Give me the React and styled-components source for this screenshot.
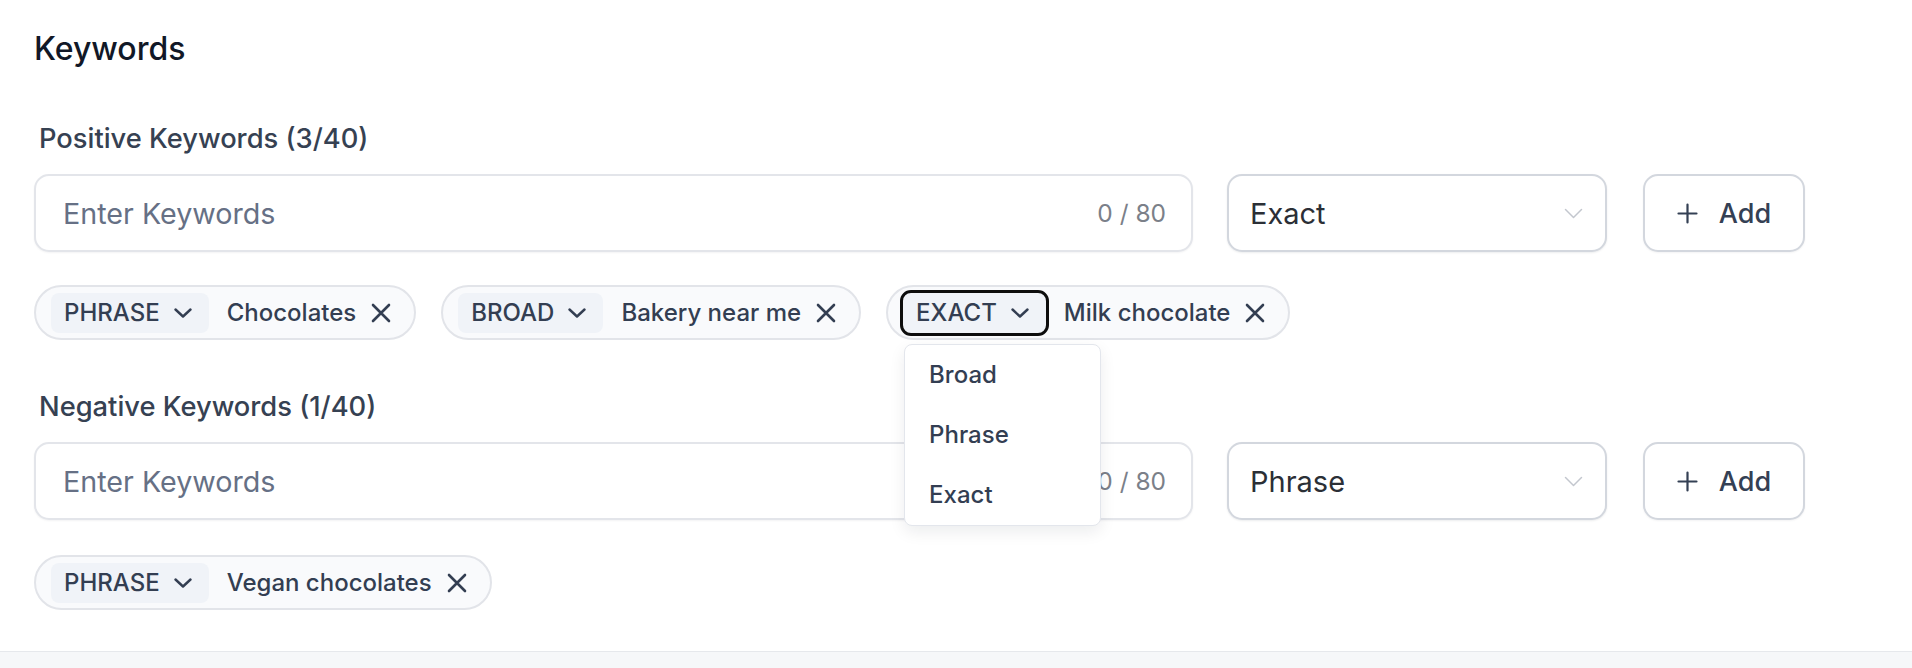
import React from 'react'
import styled, { createGlobalStyle } from 'styled-components'

const GlobalStyle = createGlobalStyle`
  * { box-sizing: border-box; }
  body {
    margin: 0;
    background: #f6f7f9;
    font-family: Inter, "Noto Sans", sans-serif;
  }
`

const Card = styled.section`
  height: 652px;
  background: #ffffff;
  padding: 29px 0 0 34px;
  box-shadow: 0 1px 3px rgba(16, 24, 40, 0.1);
  border-bottom: 1px solid #e6e8ec;
`

const Title = styled.h2`
  margin: 0;
  font-size: 32px;
  line-height: 40px;
  font-weight: 500;
  color: #111827;
`

const Label = styled.div`
  margin-top: ${({ $top }) => $top}px;
  padding-left: 5px;
  font-size: 27.3px;
  line-height: 34px;
  font-weight: 500;
  color: #364152;
`

const Row = styled.div`
  display: flex;
  align-items: stretch;
  height: 78px;
  margin-top: 18px;
`

const InputBox = styled.div`
  width: 1159px;
  display: flex;
  align-items: center;
  padding: 0 25px 0 27px;
  border: 2px solid #e3e5ea;
  border-radius: 15px;
  background: #fff;
  box-shadow: 0 1px 2px rgba(16, 24, 40, 0.05);
`

const Input = styled.input`
  flex: 1;
  min-width: 0;
  border: none;
  outline: none;
  background: transparent;
  font-family: inherit;
  font-size: 28.7px;
  color: #1f2937;
  padding: 0;

  &::placeholder {
    color: #667085;
  }
`

const Counter = styled.span`
  font-size: 24.5px;
  color: #7b8089;
`

const Select = styled.div`
  width: 380px;
  margin-left: 34px;
  display: flex;
  align-items: center;
  justify-content: space-between;
  padding: 0 22px 0 21px;
  border: 2px solid #d3d7de;
  border-radius: 15px;
  background: #fff;
  font-size: 29px;
  color: #2b2f36;
  box-shadow: 0 1px 2px rgba(16, 24, 40, 0.08);
`

const AddButton = styled.button`
  width: 162px;
  margin-left: 36px;
  display: flex;
  align-items: center;
  justify-content: center;
  gap: 21px;
  border: 2px solid #d3d7de;
  border-radius: 15px;
  background: #fff;
  font-family: inherit;
  font-size: 27px;
  font-weight: 500;
  color: #344054;
  padding: 0;
  box-shadow: 0 1px 2px rgba(16, 24, 40, 0.05);
`

const ChipRow = styled.div`
  display: flex;
  gap: 25px;
  margin-top: ${({ $top }) => $top}px;
`

const Chip = styled.div`
  position: relative;
  height: 55px;
  display: flex;
  align-items: center;
  padding: 0 23px 0 15px;
  border: 2px solid #e2e4e9;
  border-radius: 28px;
  background: #f9fafc;
  font-size: 24px;
  color: #333e52;
`

const MatchBadge = styled.div`
  position: relative;
  height: 40px;
  display: flex;
  align-items: center;
  gap: 14px;
  padding: 0 17px 0 13px;
  border-radius: 8px;
  background: #f0f3f8;
  font-weight: 500;
  outline: ${({ $open }) => ($open ? '3px solid #0d0d0d' : 'none')};
`

const ChipText = styled.span`
  margin-left: 18px;
  font-weight: 500;
`

const Remove = styled.span`
  display: flex;
  margin-left: 15px;
  color: #333e52;
`

const Menu = styled.ul`
  position: absolute;
  top: 51px;
  left: 1px;
  z-index: 5;
  width: 197px;
  margin: 0;
  padding: 0;
  list-style: none;
  background: #fff;
  border: 1px solid #e3e6ec;
  border-radius: 8px;
  box-shadow: 0 6px 16px rgba(16, 24, 40, 0.08);
`

const MenuItem = styled.li`
  height: 60px;
  display: flex;
  align-items: center;
  padding-left: 24px;
  font-size: 24px;
  font-weight: 500;
  color: #333e52;
`

const Chevron = ({ width = 18, height = 10, stroke = 'currentColor', weight = 2.4 }) => (
  <svg width={width} height={height} viewBox={`0 0 ${width} ${height}`} fill='none'>
    <polyline
      points={`1.5,1.5 ${width / 2},${height - 1.5} ${width - 1.5},1.5`}
      stroke={stroke}
      strokeWidth={weight}
      strokeLinecap='round'
      strokeLinejoin='round'
    />
  </svg>
)

const Cross = () => (
  <svg width='20' height='20' viewBox='0 0 20 20' fill='none'>
    <path d='M2 2L18 18M18 2L2 18' stroke='currentColor' strokeWidth='2.6' strokeLinecap='round' />
  </svg>
)

const PlusIcon = () => (
  <svg width='21' height='21' viewBox='0 0 21 21' fill='none'>
    <path d='M10.5 1.5V19.5M1.5 10.5H19.5' stroke='currentColor' strokeWidth='2.2' strokeLinecap='round' />
  </svg>
)

const KeywordChip = ({ match, text, open }) => (
  <Chip>
    <MatchBadge $open={open}>
      {match}
      <Chevron />
      {open && (
        <Menu>
          <MenuItem>Broad</MenuItem>
          <MenuItem>Phrase</MenuItem>
          <MenuItem>Exact</MenuItem>
        </Menu>
      )}
    </MatchBadge>
    <ChipText>{text}</ChipText>
    <Remove>
      <Cross />
    </Remove>
  </Chip>
)

const EntryRow = ({ type }) => (
  <Row>
    <InputBox>
      <Input placeholder='Enter Keywords' />
      <Counter>0 / 80</Counter>
    </InputBox>
    <Select>
      {type}
      <Chevron width={19} height={11} stroke='#c3c7ce' weight={1.5} />
    </Select>
    <AddButton>
      <PlusIcon />
      Add
    </AddButton>
  </Row>
)

const App = () => {
  return (
    <>
      <GlobalStyle />
      <Card>
        <Title>Keywords</Title>

        <Label $top={53}>Positive Keywords (3/40)</Label>
        <EntryRow type='Exact' />
        <ChipRow $top={33}>
          <KeywordChip match='PHRASE' text='Chocolates' />
          <KeywordChip match='BROAD' text='Bakery near me' />
          <KeywordChip match='EXACT' text='Milk chocolate' open />
        </ChipRow>

        <Label $top={50}>Negative Keywords (1/40)</Label>
        <EntryRow type='Phrase' />
        <ChipRow $top={35}>
          <KeywordChip match='PHRASE' text='Vegan chocolates' />
        </ChipRow>
      </Card>
    </>
  )
}

export default App
